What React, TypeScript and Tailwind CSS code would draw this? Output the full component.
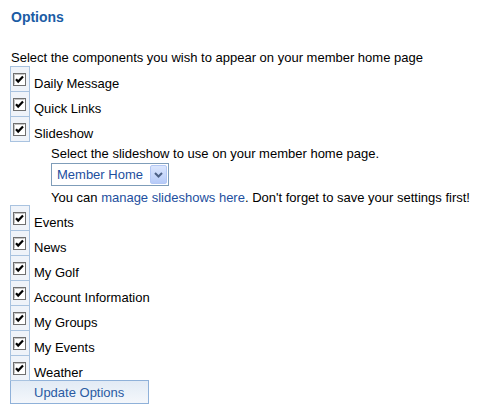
import React from 'react';

const items1 = ['Daily Message', 'Quick Links', 'Slideshow'];
const items2 = ['Events', 'News', 'My Golf', 'Account Information', 'My Groups', 'My Events', 'Weather'];

const CheckBox: React.FC = () => (
  <svg width="13" height="13" viewBox="0 0 13 13" className="block">
    <rect x="0.5" y="0.5" width="12" height="12" fill="#ffffff" stroke="#6f6f6f" />
    <path d="M1.5 11.5V1.5H11.5" fill="none" stroke="#c4c4c4" />
    <path d="M3 6.2 L5.2 8.6 L10 3.6" fill="none" stroke="#000000" strokeWidth="2.2" />
  </svg>
);

const OptionRow: React.FC<{ label: string }> = ({ label }) => (
  <div className="flex h-[25px] items-start">
    <div className="h-[26px] w-[20px] shrink-0 border border-[#a9c3e0] bg-[#eff3f9] pl-[2px] pt-[6px]">
      <CheckBox />
    </div>
    <span className="ml-[4px] mt-[10px] leading-[15px]">{label}</span>
  </div>
);

export default function App() {
  return (
    <div
      className="h-[420px] w-[480px] bg-white pl-[10px] text-[13px] text-[#000]"
      style={{ fontFamily: '"Liberation Sans", Arial, sans-serif' }}
    >
      <h2 className="pl-px pt-[9px] text-[14px] font-bold leading-[16px] text-[#1b5ca5]">Options</h2>
      <p className="mt-[25px] pl-px leading-[16px]">
        Select the components you wish to appear on your member home page
      </p>

      <div>
        {items1.map((it) => (
          <OptionRow key={it} label={it} />
        ))}
      </div>

      <div className="pl-[41px] pt-[5px]">
        <p className="leading-[15px]">Select the slideshow to use on your member home page.</p>
        <div className="mt-[2px] flex h-[23px] w-[118px] items-center justify-between border border-[#7f9db9] bg-white pl-[5px] pr-px">
          <span className="leading-[15px] text-[#1d4f9e]">Member Home</span>
          <span className="flex h-[19px] w-[17px] items-center justify-center rounded-[2px] border border-[#b4c8f5] bg-gradient-to-b from-[#dbe6fd] to-[#b7cbf8]">
            <svg width="9" height="6" viewBox="0 0 9 6">
              <path d="M1 1 L4.5 4.5 L8 1" fill="none" stroke="#4d6185" strokeWidth="2" />
            </svg>
          </span>
        </div>
        <p className="mt-[4px] leading-[15px]">
          You can <span className="text-[#1d4f9e]">manage slideshows here</span>. Don't forget to save your settings first!
        </p>
      </div>

      <div>
        {items2.map((it) => (
          <OptionRow key={it} label={it} />
        ))}
      </div>

      <button className="flex h-[24px] w-[139px] items-center border border-[#8fb1d9] bg-gradient-to-b from-[#e2ebf5] to-[#f4f7fb] pl-[23px] text-[13px] leading-[15px] text-[#2a5ba3]">
        Update Options
      </button>
    </div>
  );
}
